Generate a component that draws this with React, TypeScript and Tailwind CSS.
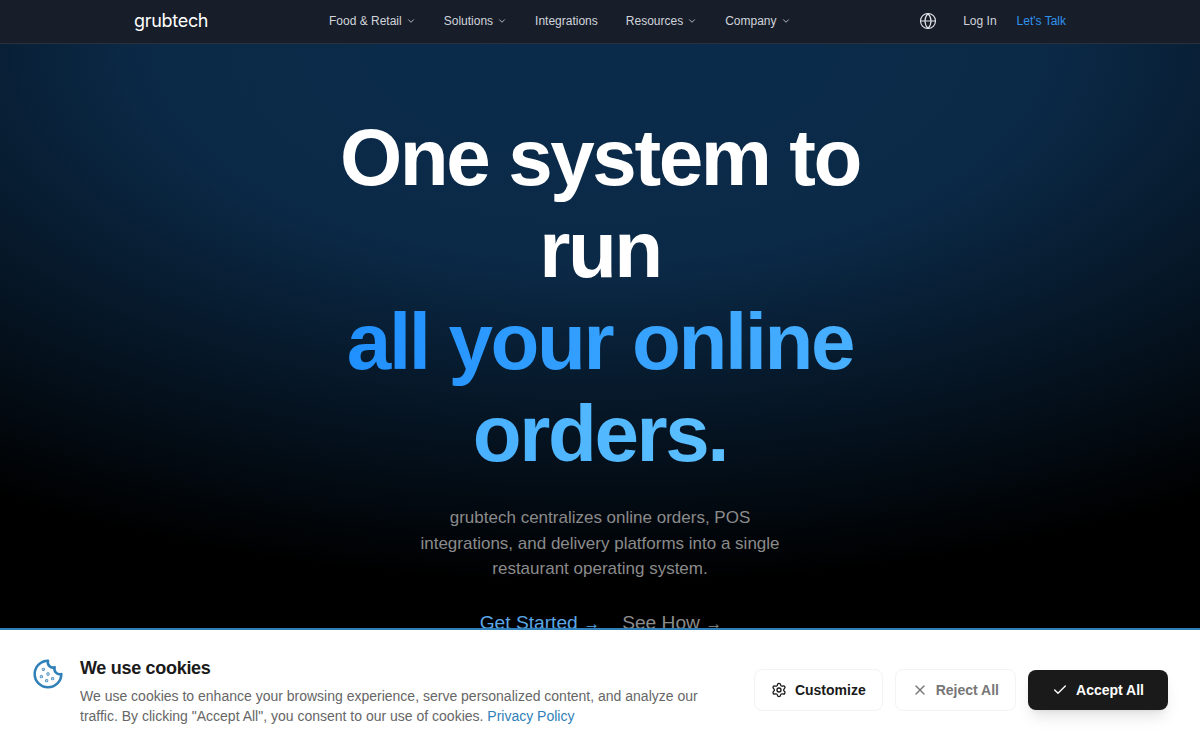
import { Check, ChevronDown, Globe, Settings, X } from "lucide-react";

const navItems = [
  { label: "Food & Retail", menu: true },
  { label: "Solutions", menu: true },
  { label: "Integrations", menu: false },
  { label: "Resources", menu: true },
  { label: "Company", menu: true },
];

const CookieIcon = () => (
  <svg viewBox="0 0 24 24" fill="none" stroke="#2f7fb8" strokeWidth="1.9" strokeLinecap="round" strokeLinejoin="round" className="w-8 h-8">
    <path d="M12 2a10 10 0 1 0 10 10 4 4 0 0 1-5-5 4 4 0 0 1-5-5" />
    <circle cx="8.5" cy="8.5" r="0.3" fill="#2f7fb8" />
    <circle cx="15.5" cy="15.5" r="0.3" fill="#2f7fb8" />
    <circle cx="12" cy="12" r="0.3" fill="#2f7fb8" />
    <circle cx="11" cy="17" r="0.3" fill="#2f7fb8" />
    <circle cx="7" cy="14" r="0.3" fill="#2f7fb8" />
  </svg>
);

const App = () => {
  return (
    <div className="relative w-full h-[750px] overflow-hidden bg-black font-['Liberation_Sans',Arial,sans-serif]">
      <nav className="h-11 bg-[#181d2a] border-b border-[#2a2f3a] flex items-center pl-[134px] pr-[134px] pb-0.5">
        <span className="w-[195px] text-[18px] leading-none text-white font-['Inter',sans-serif] tracking-[-0.3px]">
          grubtech
        </span>
        <ul className="flex items-center gap-7 text-xs text-[#d1d5db]">
          {navItems.map((item) => (
            <li key={item.label} className="flex items-center gap-1">
              {item.label}
              {item.menu && <ChevronDown size={10} />}
            </li>
          ))}
        </ul>
        <div className="ml-auto flex items-center text-xs">
          <Globe size={18} strokeWidth={1.5} className="text-[#e5e7eb] mr-[26px]" />
          <span className="text-[#d1d5db] mr-5">Log In</span>
          <span className="text-[#2f93ee]">Let's Talk</span>
        </div>
      </nav>

      <main className="h-[706px] flex flex-col items-center pt-[68px] bg-[radial-gradient(ellipse_1100px_540px_at_50%_0%,#0b2b4b_0%,#0b2a48_40%,#000_100%)]">
        <h1 className="w-[600px] text-center text-[80px] leading-[92px] font-bold tracking-[-2.4px] text-white">
          One system to run
          <br />
          <span className="bg-[linear-gradient(90deg,#2090ff,#5cc0ff)] bg-clip-text text-transparent">
            all your online orders.
          </span>
        </h1>
        <p className="w-[380px] mt-[25px] text-center text-[17px] leading-[25.5px] text-[#8b8b8b]">
          grubtech centralizes online orders, POS integrations, and delivery platforms into a single restaurant operating system.
        </p>
        <div className="flex gap-[22px] mt-[27px] pl-0.5 text-[19.2px] leading-7">
          <span className="text-[#5ba7e6]">
            Get Started <span className="text-[17px]">→</span>
          </span>
          <span className="text-[#8b8b8b]">
            See How <span className="text-[17px]">→</span>
          </span>
        </div>
      </main>

      <div className="absolute left-0 right-0 bottom-0 h-[122px] bg-white border-t-2 border-[#2f7fb8] flex items-start pl-8 pr-8 pt-[27px]">
        <div className="mr-4 mt-px">
          <CookieIcon />
        </div>
        <div className="w-[640px]">
          <h2 className="text-lg leading-[22px] font-bold text-[#1a1a1a] tracking-[-0.3px]">We use cookies</h2>
          <p className="mt-[7px] text-sm leading-5 text-[#666]">
            We use cookies to enhance your browsing experience, serve personalized content, and analyze our traffic. By clicking "Accept All", you consent to our use of cookies.{" "}
            <span className="text-[#2f7fb8]">Privacy Policy</span>
          </p>
        </div>
        <div className="ml-auto flex items-center gap-3 mt-3 text-sm font-bold">
          <button className="h-[42px] px-4 flex items-center gap-2 rounded-lg border border-[#f3f3f3] bg-white text-[#1a1a1a]">
            <Settings size={16} />
            Customize
          </button>
          <button className="h-[42px] px-4 flex items-center gap-2 rounded-lg border border-[#f3f3f3] bg-white text-[#777]">
            <X size={16} />
            Reject All
          </button>
          <button className="h-10 w-[140px] justify-center flex items-center gap-2 rounded-lg bg-[#1a1a1a] text-white shadow-lg">
            <Check size={16} />
            Accept All
          </button>
        </div>
      </div>
    </div>
  );
};

export default App;
